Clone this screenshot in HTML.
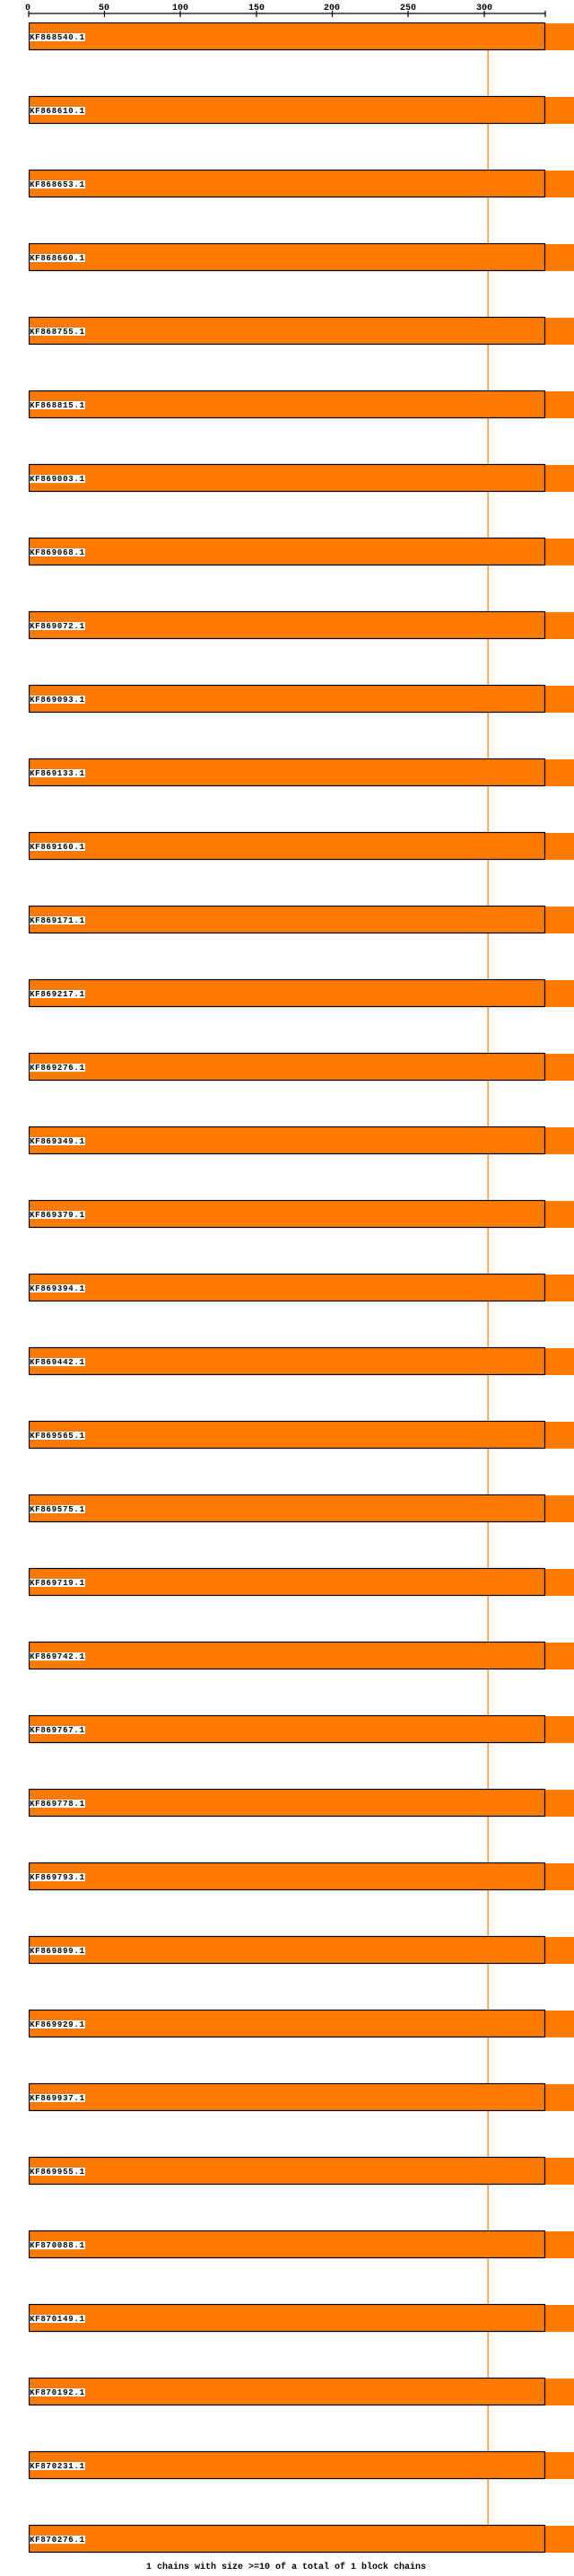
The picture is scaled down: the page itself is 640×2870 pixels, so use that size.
<!DOCTYPE html>
<html><head><meta charset="utf-8"><style>
html,body{margin:0;padding:0;background:#fff;}
svg{display:block;}
text{font-family:"Liberation Mono","DejaVu Sans Mono",monospace;}
</style></head><body>
<svg width="640" height="2870" viewBox="0 0 640 2870" xmlns="http://www.w3.org/2000/svg">
<defs>
<g id="bar">
<rect x="608" y="1" width="32" height="30" fill="#ff7b00"/>
<rect x="32.5" y="0.5" width="575" height="30" fill="#ff7b00" stroke="#000" stroke-width="1.2"/>
<rect x="33" y="12" width="62" height="9" fill="#fff"/>
</g>
</defs>
<rect x="543.5" y="56" width="1.2" height="2757" fill="#ff7b00"/>
<g stroke="#000" stroke-width="1.2">
<line x1="32" y1="15" x2="608" y2="15"/>
<line x1="32" y1="12" x2="32" y2="19"/>
<line x1="116.5" y1="12" x2="116.5" y2="19"/>
<line x1="201" y1="12" x2="201" y2="19"/>
<line x1="286" y1="12" x2="286" y2="19"/>
<line x1="370.5" y1="12" x2="370.5" y2="19"/>
<line x1="455" y1="12" x2="455" y2="19"/>
<line x1="540" y1="12" x2="540" y2="19"/>
<line x1="608" y1="12" x2="608" y2="19"/>
</g>
<g font-size="10" text-anchor="middle" fill="#000" font-weight="bold">
<text x="31" y="11">0</text><text x="116" y="11">50</text><text x="201" y="11">100</text><text x="286" y="11">150</text><text x="370" y="11">200</text><text x="455" y="11">250</text><text x="540" y="11">300</text>
</g>
<g font-size="9" fill="#000" font-weight="bold">
<use href="#bar" y="25"/><text x="33" y="44" textLength="61">KF868540.1</text>
<use href="#bar" y="107"/><text x="33" y="126" textLength="61">KF868610.1</text>
<use href="#bar" y="189"/><text x="33" y="208" textLength="61">KF868653.1</text>
<use href="#bar" y="271"/><text x="33" y="290" textLength="61">KF868660.1</text>
<use href="#bar" y="353"/><text x="33" y="372" textLength="61">KF868755.1</text>
<use href="#bar" y="435"/><text x="33" y="454" textLength="61">KF868815.1</text>
<use href="#bar" y="517"/><text x="33" y="536" textLength="61">KF869003.1</text>
<use href="#bar" y="599"/><text x="33" y="618" textLength="61">KF869068.1</text>
<use href="#bar" y="681"/><text x="33" y="700" textLength="61">KF869072.1</text>
<use href="#bar" y="763"/><text x="33" y="782" textLength="61">KF869093.1</text>
<use href="#bar" y="845"/><text x="33" y="864" textLength="61">KF869133.1</text>
<use href="#bar" y="927"/><text x="33" y="946" textLength="61">KF869160.1</text>
<use href="#bar" y="1009"/><text x="33" y="1028" textLength="61">KF869171.1</text>
<use href="#bar" y="1091"/><text x="33" y="1110" textLength="61">KF869217.1</text>
<use href="#bar" y="1173"/><text x="33" y="1192" textLength="61">KF869276.1</text>
<use href="#bar" y="1255"/><text x="33" y="1274" textLength="61">KF869349.1</text>
<use href="#bar" y="1337"/><text x="33" y="1356" textLength="61">KF869379.1</text>
<use href="#bar" y="1419"/><text x="33" y="1438" textLength="61">KF869394.1</text>
<use href="#bar" y="1501"/><text x="33" y="1520" textLength="61">KF869442.1</text>
<use href="#bar" y="1583"/><text x="33" y="1602" textLength="61">KF869565.1</text>
<use href="#bar" y="1665"/><text x="33" y="1684" textLength="61">KF869575.1</text>
<use href="#bar" y="1747"/><text x="33" y="1766" textLength="61">KF869719.1</text>
<use href="#bar" y="1829"/><text x="33" y="1848" textLength="61">KF869742.1</text>
<use href="#bar" y="1911"/><text x="33" y="1930" textLength="61">KF869767.1</text>
<use href="#bar" y="1993"/><text x="33" y="2012" textLength="61">KF869778.1</text>
<use href="#bar" y="2075"/><text x="33" y="2094" textLength="61">KF869793.1</text>
<use href="#bar" y="2157"/><text x="33" y="2176" textLength="61">KF869899.1</text>
<use href="#bar" y="2239"/><text x="33" y="2258" textLength="61">KF869929.1</text>
<use href="#bar" y="2321"/><text x="33" y="2340" textLength="61">KF869937.1</text>
<use href="#bar" y="2403"/><text x="33" y="2422" textLength="61">KF869955.1</text>
<use href="#bar" y="2485"/><text x="33" y="2504" textLength="61">KF870088.1</text>
<use href="#bar" y="2567"/><text x="33" y="2586" textLength="61">KF870149.1</text>
<use href="#bar" y="2649"/><text x="33" y="2668" textLength="61">KF870192.1</text>
<use href="#bar" y="2731"/><text x="33" y="2750" textLength="61">KF870231.1</text>
<use href="#bar" y="2813"/><text x="33" y="2832" textLength="61">KF870276.1</text>
</g>
<text x="163" y="2862" font-size="10" textLength="312" fill="#000" font-weight="bold">1 chains with size &gt;=10 of a total of 1 block chains</text>
</svg>
</body></html>
